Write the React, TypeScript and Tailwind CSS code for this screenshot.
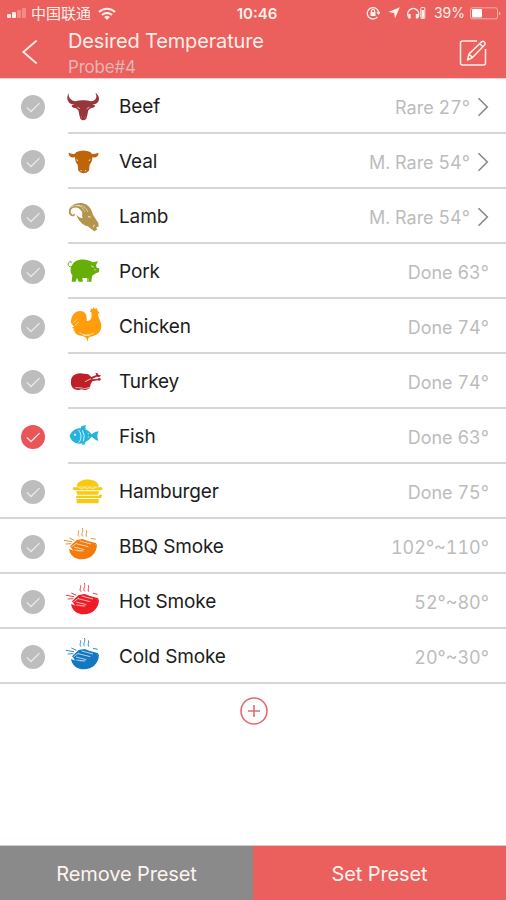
import { useState } from "react";
import type { ReactNode } from "react";
import clsx from "clsx";

interface Preset {
  id: string;
  label: string;
  value: string;
  icon: ReactNode;
  hasLevels?: boolean;
  fullDivider?: boolean;
}

const presets: Preset[] = [
  { id: "beef", label: "Beef", value: "Rare 27°", icon: <BeefIcon />, hasLevels: true },
  { id: "veal", label: "Veal", value: "M. Rare 54°", icon: <VealIcon />, hasLevels: true },
  { id: "lamb", label: "Lamb", value: "M. Rare 54°", icon: <LambIcon />, hasLevels: true },
  { id: "pork", label: "Pork", value: "Done 63°", icon: <PorkIcon /> },
  { id: "chicken", label: "Chicken", value: "Done 74°", icon: <ChickenIcon /> },
  { id: "turkey", label: "Turkey", value: "Done 74°", icon: <TurkeyIcon /> },
  { id: "fish", label: "Fish", value: "Done 63°", icon: <FishIcon /> },
  { id: "hamburger", label: "Hamburger", value: "Done 75°", icon: <BurgerIcon />, fullDivider: true },
  { id: "bbq", label: "BBQ Smoke", value: "102°~110°", icon: <SmokeIcon className="-ml-[2px] text-[#f47a0c]" />, fullDivider: true },
  { id: "hot", label: "Hot Smoke", value: "52°~80°", icon: <SmokeIcon className="text-[#ee1c25]" />, fullDivider: true },
  { id: "cold", label: "Cold Smoke", value: "20°~30°", icon: <SmokeIcon className="text-[#1478c0]" />, fullDivider: true },
];

export default function App() {
  const [selected, setSelected] = useState("fish");

  return (
    <div className="flex h-[900px] w-[506px] flex-col overflow-hidden bg-white font-['Inter','Noto_Sans_CJK_SC',sans-serif]">
      <header className="h-[79px] shrink-0 border-b border-[#f3cfcd] bg-[#eb5f5d] text-[#fff0ea]">
        <StatusBar />
        <div className="flex h-[52px] items-center">
          <button type="button" aria-label="Back" className="ml-[21px] flex w-[47px]">
            <svg width="18" height="26" viewBox="0 0 18 26" fill="none" stroke="currentColor" strokeWidth="1.8">
              <path d="M15.7 1.5 2.3 13l13.4 11.5" />
            </svg>
          </button>
          <div className="flex-1 pt-[2px]">
            <h1 className="text-[20px] leading-[27px] tracking-[-0.15px] whitespace-nowrap">Desired Temperature</h1>
            <p className="text-[17px] leading-[24px] tracking-[-0.2px] text-[#e5b5b3]">Probe#4</p>
          </div>
          <button type="button" aria-label="Edit" className="mr-[19px]">
            <EditIcon />
          </button>
        </div>
      </header>

      <ul className="shrink-0">
        {presets.map((preset) => (
          <PresetRow
            key={preset.id}
            preset={preset}
            active={preset.id === selected}
            onSelect={() => setSelected(preset.id)}
          />
        ))}
      </ul>

      <button type="button" aria-label="Add preset" className="mx-auto mt-[13px] pl-px text-[#e46a6d]">
        <svg width="28" height="28" viewBox="0 0 28 28" fill="none" stroke="currentColor" strokeWidth="1.6">
          <circle cx="14" cy="14" r="13" />
          <path d="M14 8v12M8 14h12" />
        </svg>
      </button>

      <footer className="mt-auto grid h-[55px] shrink-0 grid-cols-2 border-t border-[#d9c9c8] text-[20px] tracking-[-0.12px] text-[#fff3f0]">
        <button type="button" className="bg-[#8a8a8a] pt-px">
          Remove Preset
        </button>
        <button type="button" className="bg-[#eb5f5d] pt-px">
          Set Preset
        </button>
      </footer>
    </div>
  );
}

function PresetRow({ preset, active, onSelect }: { preset: Preset; active: boolean; onSelect: () => void }) {
  return (
    <li className="flex h-[55px]">
      <button
        type="button"
        onClick={onSelect}
        aria-label={preset.label}
        className={clsx(
          "flex w-[68px] items-center border-b-2 pl-[21px]",
          preset.fullDivider ? "border-[#d6d6d6]" : "border-transparent",
          active ? "text-[#ea5557]" : "text-[#bdbdbd]",
        )}
      >
        <svg width="24" height="24" viewBox="0 0 24 24" className="mt-[2px]">
          <circle cx="12" cy="12" r="12" fill="currentColor" />
          <path d="m5.8 12.4 4.2 4.1 8.6-8.4" fill="none" stroke="#f1e8e7" strokeWidth="1.3" />
        </svg>
      </button>
      <div className="flex flex-1 items-center border-b-2 border-[#d6d6d6] pr-[17px]">
        <span className="-ml-[5px] w-[56px]">{preset.icon}</span>
        <span className="flex-1 pt-[4px] text-[19px] tracking-[-0.14px] whitespace-nowrap text-[#1c1c1c]">{preset.label}</span>
        <span className="pt-[3px] text-[18px] whitespace-nowrap text-[#bcbcbc] tabular-nums">{preset.value}</span>
        {preset.hasLevels ? (
          <svg width="12" height="20" viewBox="0 0 12 20" className="mt-[2px] ml-[7px]" fill="none" stroke="#888" strokeWidth="1.6">
            <path d="m1.5 1.2 8.8 8.8-8.8 8.8" />
          </svg>
        ) : null}
      </div>
    </li>
  );
}

function StatusBar() {
  return (
    <div className="grid h-[26px] grid-cols-3 items-center text-[14px] leading-none">
      <div className="flex items-center pl-[7px]">
        <svg width="19" height="11" viewBox="0 0 19 11" fill="currentColor">
          <rect x="0" y="6" width="4" height="4" rx="1" />
          <rect x="5" y="4" width="4" height="6" rx="1" />
          <rect x="10" y="2" width="4" height="8" rx="1" opacity="0.3" />
          <rect x="15" y="0" width="4" height="10" rx="1" opacity="0.3" />
        </svg>
        <span className="ml-[5px] text-[15px]">中国联通</span>
        <svg width="18" height="13" viewBox="0 0 18 13" className="ml-[7px]" fill="none" stroke="currentColor" strokeWidth="2">
          <path d="M1 5a11.5 11.5 0 0 1 16 0M4 8a7.4 7.4 0 0 1 10 0" />
          <path d="M6.2 10a4.2 4.2 0 0 1 5.6 0L9 13z" fill="currentColor" stroke="none" />
        </svg>
      </div>
      <span className="pl-[8px] text-center text-[15px] font-semibold">10:46</span>
      <div className="flex items-center justify-end pr-[5px]">
        <svg width="14" height="14" viewBox="0 0 14 14" fill="none" stroke="currentColor" strokeWidth="1.3">
          <path d="M11.5 10.8A5.7 5.7 0 1 1 12.7 7" />
          <path d="m10.9 6.2 1.8 1.7 1.2-2" />
          <rect x="4.5" y="6" width="5" height="4" fill="currentColor" stroke="none" />
          <path d="M5.4 6V5a1.6 1.6 0 0 1 3.2 0v1" />
        </svg>
        <svg width="12" height="12" viewBox="0 0 12 12" className="ml-[8px]" fill="currentColor">
          <path d="M11.8.2 7 11.5 6.2 6 .3 5.1z" />
        </svg>
        <svg width="22" height="14" viewBox="0 0 22 14" className="ml-[6px]" fill="none" stroke="currentColor" strokeWidth="1.5">
          <path d="M3 11.5A5.5 5.5 0 1 1 11.5 11.5" />
          <path d="M3.5 8v4.5M11 8v4.5" strokeWidth="2.4" />
          <rect x="14.8" y="1.5" width="4" height="11" rx="1" strokeWidth="1" />
          <path d="M16.8 4v8" strokeWidth="2.4" />
        </svg>
        <span className="ml-[6px]">39%</span>
        <svg width="31" height="13" viewBox="0 0 31 13" className="ml-[5px]">
          <rect x="0.5" y="0.8" width="27" height="11" rx="2" fill="none" stroke="currentColor" opacity="0.55" />
          <rect x="2" y="2" width="10" height="8.6" rx="1" fill="white" />
          <path d="M29 4.5v4q1.5-1 1.5-2t-1.5-2" fill="currentColor" opacity="0.55" />
        </svg>
      </div>
    </div>
  );
}

function EditIcon() {
  return (
    <svg width="28" height="27" viewBox="0 0 28 27" fill="none" stroke="currentColor" strokeWidth="1.5" strokeLinejoin="round">
      <path d="M18 2H3.5Q1.5 2 1.5 4v20q0 2 2 2h21q2 0 2-2V10" />
      <path d="m8.5 21 1.5-6L22.8 2.6q1.2-1 2.6.4t.4 2.8L13.5 18.5zM10 15l3.5 3.5M20.7 4.8l3.4 3.2" />
    </svg>
  );
}

function IconFrame({ className, children }: { className?: string; children: ReactNode }) {
  return (
    <svg width="40" height="53" viewBox="0 0 120 159" fill="currentColor" className={className} aria-hidden="true">
      {children}
    </svg>
  );
}

function BeefIcon() {
  return (
    <IconFrame className="text-[#98363b]">
      <path d="M17 41c-2 14 6 24 22 26 12-4 32-4 44 0 16-2 21-12 14-26 14 9 15 26 2 33l-11 3 8 2c1 6-7 9-12 8l-8 7-3 14-3 11q-9 9-18 0l-3-11-3-14-8-7c-6 1-13-2-12-8l8-2-11-3C12 68 10 54 17 41z" />
      <path d="m43 85 8 4M79 85l-8 4M55 114l2 2M67 114l-2 2" fill="none" stroke="white" strokeWidth="2" />
    </IconFrame>
  );
}

function VealIcon() {
  return (
    <IconFrame className="text-[#bd650b]">
      <path d="M40 54q21-9 42 0l5 6c6 0 13-2 19-4 2 10-7 16-18 14 0 9-3 17-8 22l-2 18q-16 15-32 0l-2-18c-5-5-8-13-8-22-12 2-20-4-19-14 6 2 12 4 18 4z" />
      <path d="m41 76 3 5M81 76l-3 5M53 108l3 4M69 108l-3 4" stroke="white" strokeWidth="2.5" fill="none" />
    </IconFrame>
  );
}

function LambIcon() {
  return (
    <IconFrame className="text-[#b4944c]">
      <path d="M58 71c-5-13-17-19-28-14-8 4-10 15-1 20l8-3c-1 8-9 10-15 5-7-7-6-21 5-29 19-14 47-9 56 10 5 8 5 15 9 21l14 21 1 11-7 1 2 8-8 5-20-15c-17-4-28-19-34-35 6 7 12 10 19 11-2-6-2-11-1-17z" />
      <path d="M24 55c18-11 34-5 41 13M41 50c16-3 29 5 33 19" stroke="white" strokeWidth="1.5" fill="none" />
      <path d="m75 83 8 1M94 107l-3 8" stroke="white" strokeWidth="2.4" fill="none" />
    </IconFrame>
  );
}

function PorkIcon() {
  return (
    <IconFrame className="text-[#66ae08]">
      <path d="M28 62c8-17 41-21 60-7l17-3-6 12 2 7 8 2-1 11-12 5-9 7-2 17H72v-11H58l2 11H47l-5-12-4 12H26l2-20c-7-7-7-21 0-31z" />
      <path d="M28 69c-11 1-16-7-10-14 3-5 9-3 6 2" fill="none" stroke="currentColor" strokeWidth="3" />
      <path d="m84 65 9 5M93 77l5 1M75 103v9" fill="none" stroke="white" strokeWidth="2" />
    </IconFrame>
  );
}

function ChickenIcon() {
  return (
    <IconFrame className="text-[#ff9d0a]">
      <path d="M24 72c-1-21 10-36 27-36 16 0 22 13 20 29 7 3 15-3 15-14l-1-11-5-2 4-4-2-5 7 1 3-5 3 5 7-2 2 8 6 5-5 4c1 15 10 22 10 36 0 19-15 30-34 32l-6 5v11l-6-13-9-5C43 110 36 104 35 97l-6-5h6l-8-8h7z" />
      <path d="m31 71 12-10M36 79l11-9M49 100c12 10 29 10 44 2M60 109l20 1" fill="none" stroke="white" strokeWidth="1.8" />
    </IconFrame>
  );
}

function TurkeyIcon() {
  return (
    <IconFrame className="text-[#bd2026]">
      <path d="M24 82c0-14 10-23 27-24l25 3 9 8 15-6-3-5 6-1 4 6 7 1-5 5-8-1-15 8 17-1 6-4 5 4-3 5-7-1-16 3-5 8-2 12-12 6H42C29 106 22 95 24 82z" />
      <path d="m66 83 18-9M37 101l22 1M50 108l34-9" fill="none" stroke="white" strokeWidth="2" />
    </IconFrame>
  );
}

function FishIcon() {
  return (
    <IconFrame className="text-[#25b3df]">
      <path d="M20 80c6-14 17-22 33-22l2-6 15-4-3 6 1 7q10 4 18 15c4-2 9-8 21-9-5 9-5 17-1 29-8-3-14-8-20-13q-8 11-18 15l-3 8-8 2 1-5C39 107 24 97 20 80z" />
      <path d="M46 63c11 11 10 28 1 38M58 64q10 15 3 33" fill="none" stroke="white" strokeWidth="2.5" />
      <path d="m74 73 4 2M74 85l4-2" fill="none" stroke="white" strokeWidth="2" />
      <circle cx="36" cy="77" r="3" fill="white" />
    </IconFrame>
  );
}

function BurgerIcon() {
  return (
    <IconFrame className="text-[#f7c911]">
      <path d="M41 68c0-29 65-29 66 0z" />
      <path d="M30 70h87l2 6-5 3H34l-5-3z" />
      <path d="M40 82h68l-3 10H43zM39 95h68l7-4 4 4-5 7H40zM41 105h66v10q0 3-3 3H44q-3 0-3-3z" />
      <path d="m48 71 8 4 8-4 8 4 8-4 8 4 10-4" fill="none" stroke="white" strokeWidth="1.8" />
    </IconFrame>
  );
}

function SmokeIcon({ className }: { className?: string }) {
  return (
    <IconFrame className={className}>
      <path d="M24 90q40 20 84-15c0 29-20 46-45 46-22 0-36-13-39-31z" />
      <path d="m27 82 20-19 18-3 16 6 25 7-6 13-15 9-45 4z" />
      <path d="m39 84 31 8M45 74l37 9M56 66l34 9M40 93l27 3M31 84l16-12" fill="none" stroke="white" strokeWidth="2" />
      <path
        d="M54 53c-7-8 2-11-2-19M65 52c-7-9 4-13-1-25M77 53c-5-8 3-10-1-19M9 64l24 4M14 75l17-1M25 57l15 7M90 58l14 3"
        fill="none"
        stroke="currentColor"
        strokeWidth="2.6"
      />
    </IconFrame>
  );
}
